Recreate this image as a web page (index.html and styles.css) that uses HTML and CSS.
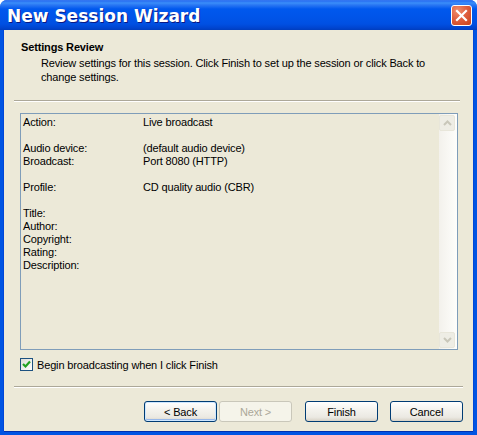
FILE: index.html
```html
<!DOCTYPE html>
<html>
<head>
<meta charset="utf-8">
<link rel="stylesheet" href="styles.css">
</head>
<body>
<div class="window">
  <div class="titlebar">
    <span class="title">New Session Wizard</span>
    <span class="close">
      <svg width="13" height="13" viewBox="0 0 13 13"><path d="M2 2 L11 11 M11 2 L2 11" stroke="#fff" stroke-width="2.2" stroke-linecap="square"/></svg>
    </span>
  </div>
  <div class="frame">
    <div class="header">
      <div class="h-title">Settings Review</div>
      <div class="h-desc">Review settings for this session. Click Finish to set up the session or click Back to change settings.</div>
    </div>
    <div class="sep sep-top"></div>
    <div class="listbox">
      <div class="rows">
        <div class="row"><span class="k">Action:</span><span class="v">Live broadcast</span></div>
        <div class="row"></div>
        <div class="row"><span class="k">Audio device:</span><span class="v">(default audio device)</span></div>
        <div class="row"><span class="k">Broadcast:</span><span class="v">Port 8080 (HTTP)</span></div>
        <div class="row"></div>
        <div class="row"><span class="k">Profile:</span><span class="v">CD quality audio (CBR)</span></div>
        <div class="row"></div>
        <div class="row"><span class="k">Title:</span></div>
        <div class="row"><span class="k">Author:</span></div>
        <div class="row"><span class="k">Copyright:</span></div>
        <div class="row"><span class="k">Rating:</span></div>
        <div class="row"><span class="k">Description:</span></div>
      </div>
      <div class="scrollbar">
        <div class="sbtn"><svg width="9" height="6" viewBox="0 0 9 6"><path d="M1 5 L4.5 1.5 L8 5" fill="none" stroke="#c9c7ba" stroke-width="2"/></svg></div>
        <div class="track"></div>
        <div class="sbtn"><svg width="9" height="6" viewBox="0 0 9 6"><path d="M1 1 L4.5 4.5 L8 1" fill="none" stroke="#c9c7ba" stroke-width="2"/></svg></div>
      </div>
    </div>
    <label class="check">
      <span class="box"><svg width="9" height="9" viewBox="0 0 9 9"><path d="M1 4 L3.5 6.5 L8 1.5" fill="none" stroke="#21a121" stroke-width="2.2"/></svg></span>
      <span>Begin broadcasting when I click Finish</span>
    </label>
    <div class="sep sep-bottom"></div>
    <div class="buttons">
      <div class="nav">
        <span class="btn default">&lt; Back</span>
        <span class="btn disabled">Next &gt;</span>
      </div>
      <span class="btn">Finish</span>
      <span class="btn">Cancel</span>
    </div>
  </div>
</div>
</body>
</html>
```
FILE: styles.css
```css
html, body {
  margin: 0;
  padding: 0;
  background: #ffffff;
}
body {
  font-family: "Liberation Sans", Arial, sans-serif;
  font-size: 11px;
  letter-spacing: -0.15px;
  color: #000;
}
.window {
  width: 477px;
  height: 435px;
  display: flex;
  flex-direction: column;
  border-radius: 7px 7px 0 0;
  overflow: hidden;
  background: #0054e3;
}
.titlebar {
  height: 30px;
  flex: none;
  display: flex;
  align-items: center;
  justify-content: space-between;
  padding: 0 5px 0 7px;
  background: linear-gradient(to bottom, #3b7cf0 0px, #2a6ff2 1px, #3a8ef9 3px, #2a77f3 5px, #0058ee 9px, #0054e8 18px, #0050e2 24px, #0044cf 28px, #003dbd 30px);
}
.title {
  font-family: "DejaVu Sans", "Liberation Sans", Arial, sans-serif;
  font-weight: bold;
  font-size: 17px;
  letter-spacing: 0;
  color: #fff;
  text-shadow: 1px 1px 0 #0a1883;
  margin-top: 1px;
}
.close {
  width: 21px;
  height: 21px;
  box-sizing: border-box;
  border: 1px solid #fff;
  border-radius: 3px;
  background: radial-gradient(circle at 30% 25%, #f08e6c 0%, #e06040 45%, #c8421a 100%);
  display: flex;
  align-items: center;
  justify-content: center;
  margin-top: 1px;
}
.frame {
  flex: 1;
  margin: 0 4px 4px 4px;
  background: #ece9d8;
  display: flex;
  flex-direction: column;
  box-shadow: -1px 0 0 #0046d8, 1px 0 0 #0046d8, 0 1px 0 #0030b0;
}
.header {
  padding: 11px 0 0 17px;
  height: 59px;
  box-sizing: border-box;
}
.h-title {
  font-weight: bold;
  line-height: 13px;
}
.h-desc {
  margin: 2px 0 0 20px;
  line-height: 14px;
  width: 400px;
}
.sep {
  height: 0;
  border-top: 1px solid #aca899;
  border-bottom: 1px solid #ffffff;
  margin-left: 10px;
}
.sep-top {
  margin-top: 11px;
  width: 446px;
}
.listbox {
  margin: 11px 0 0 16px;
  width: 438px;
  height: 237px;
  box-sizing: border-box;
  border: 1px solid #7f9db9;
  display: flex;
}
.rows {
  flex: 1;
  padding: 2px 0 0 2px;
}
.row {
  height: 13px;
  line-height: 13px;
  display: flex;
}
.k {
  width: 120px;
}
.scrollbar {
  width: 17px;
  display: flex;
  flex-direction: column;
  padding: 1px 1px 1px 0;
  background: linear-gradient(to right, #f3f1ec, #fefefb);
}
.sbtn {
  height: 16px;
  width: 16px;
  box-sizing: border-box;
  border: 1px solid #e8e6da;
  border-radius: 2px;
  background: #eeede5;
  display: flex;
  align-items: center;
  justify-content: center;
}
.track {
  flex: 1;
}
.check {
  margin: 8px 0 0 16px;
  display: flex;
  align-items: center;
  gap: 4px;
  height: 13px;
}
.box {
  width: 13px;
  height: 13px;
  box-sizing: border-box;
  border: 1px solid #1c5180;
  background: linear-gradient(135deg, #dcdcd7, #ffffff);
  display: flex;
  align-items: center;
  justify-content: center;
}
.sep-bottom {
  margin-top: 15px;
  width: 449px;
}
.buttons {
  margin: 13px 0 0 140px;
  display: flex;
  gap: 12px;
}
.nav {
  display: flex;
  gap: 2px;
  margin-right: 1px;
}
.btn {
  width: 73px;
  height: 21px;
  box-sizing: border-box;
  border: 1px solid #003c74;
  border-radius: 3px;
  background: linear-gradient(to bottom, #ffffff 0%, #f4f3ee 40%, #ebe9e2 80%, #d8d2c6 100%);
  display: flex;
  align-items: center;
  justify-content: center;
}
.btn.default {
  box-shadow: inset 0 0 0 1px #cee7ff, inset 0 -1px 0 1px #98b8ea;
}
.btn.disabled {
  border-color: #c9c7ba;
  background: #f5f4ea;
  color: #aca899;
}
```
